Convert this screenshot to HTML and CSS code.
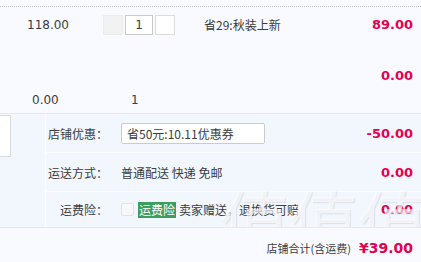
FILE: index.html
```html
<!DOCTYPE html>
<html lang="zh-CN">
<head>
    <meta charset="UTF-8">
    <title>订单确认</title>
    <link rel="stylesheet" href="styles.css">
</head>
<body>
    <div class="order">
        <div class="item">
            <div class="item-row">
                <div class="price">118.00</div>
                <div class="qty">
                    <span class="qty-btn minus"></span>
                    <span class="qty-input">1</span>
                    <span class="qty-btn plus"></span>
                </div>
                <div class="promo">省29:秋装上新</div>
                <div class="sum">89.00</div>
            </div>
            <div class="item-row row-extra">
                <div class="sum">0.00</div>
            </div>
            <div class="item-row row-sub">
                <div class="price">0.00</div>
                <div class="sub-qty">1</div>
            </div>
        </div>

        <div class="shop">
            <div class="shop-side">
                <div class="memo"></div>
            </div>
            <div class="shop-main">
                <div class="opt">
                    <div class="opt-label">店铺优惠：</div>
                    <div class="opt-body">
                        <div class="coupon">省50元:10.11优惠券</div>
                    </div>
                    <div class="sum">-50.00</div>
                </div>
                <div class="opt">
                    <div class="opt-label">运送方式：</div>
                    <div class="opt-body">普通配送 快递 免邮</div>
                    <div class="sum">0.00</div>
                </div>
                <div class="opt">
                    <div class="opt-label">运费险：</div>
                    <div class="opt-body">
                        <span class="check"></span>
                        <span class="tag">运费险</span>
                        <span>卖家赠送，退换货可赔</span>
                    </div>
                    <div class="sum">0.00</div>
                </div>
            </div>
            <div class="watermark">值值值</div>
        </div>

        <div class="total">
            <span class="total-label">店铺合计(含运费)</span>
            <span class="total-sum">¥39.00</span>
        </div>
    </div>
</body>
</html>
```

FILE: styles.css
```css
body {
    margin: 0;
    background: #f8faff;
    color: #3c3c3c;
    font-family: "Noto Sans CJK SC", "DejaVu Sans", sans-serif;
    font-size: 12px;
}
.order {
    width: 421px;
    height: 262px;
    overflow: hidden;
}
.item {
    margin-top: 6px;
    border-top: 1px dotted #b8bcc4;
    border-bottom: 1px solid #e4e8ef;
    height: 106px;
}
.item-row {
    display: flex;
    align-items: center;
    height: 35px;
}
.row-extra {
    height: 18px;
    margin-top: 24px;
    justify-content: flex-end;
}
.row-sub {
    height: 18px;
    margin-top: 7px;
}
.price {
    width: 103px;
    padding-left: 27px;
    box-sizing: border-box;
    font-family: "DejaVu Sans", sans-serif;
    font-size: 12px;
}
.row-sub .price {
    padding-left: 32px;
    width: 131px;
}
.sub-qty {
    font-family: "DejaVu Sans", sans-serif;
}
.qty {
    display: flex;
    gap: 1px;
    width: 101px;
}
.qty-btn, .qty-input {
    height: 20px;
    border: 1px solid #dcdcdc;
    background: #fff;
    box-sizing: border-box;
}
.qty-btn {
    width: 20px;
}
.qty-btn.minus {
    background: #f2f2f2;
    border-color: #ececec;
}
.qty-input {
    width: 28px;
    margin-left: 1px;
    margin-right: 1px;
    text-align: center;
    line-height: 18px;
    border-color: #c8c8c8;
    font-family: "DejaVu Sans", sans-serif;
}
.promo {
    flex: 1;
}
.sum {
    width: 90px;
    margin-left: auto;
    padding-right: 8px;
    text-align: right;
    color: #e5004f;
    font-family: "DejaVu Sans", sans-serif;
    font-weight: bold;
    font-size: 13px;
}
.shop {
    position: relative;
    display: flex;
    background: #f2f6fd;
    border-bottom: 1px solid #e4e8ef;
    height: 113px;
    overflow: hidden;
}
.shop-side {
    width: 45px;
    border-right: 1px solid #fbfcfe;
    padding-top: 1px;
}
.memo {
    width: 10px;
    height: 40px;
    background: #fff;
    border: 1px solid #d8dbe0;
    border-left: none;
}
.shop-main {
    flex: 1;
    display: flex;
    flex-direction: column;
}
.opt {
    display: flex;
    align-items: center;
    height: 38px;
    border-bottom: 1px solid #fbfcfe;
}
.opt:last-child {
    border-bottom: none;
    flex: 1;
}
.opt-label {
    width: 62px;
    padding-right: 13px;
    text-align: right;
}
.opt-body {
    display: flex;
    align-items: center;
    flex: 1;
    white-space: nowrap;
}
.coupon {
    width: 144px;
    height: 21px;
    box-sizing: border-box;
    padding-left: 5px;
    line-height: 19px;
    background: #fff;
    border: 1px solid #c8cbd0;
    border-radius: 2px;
}
.check {
    width: 11px;
    height: 11px;
    margin-right: 4px;
    border: 1px solid #e0e2e6;
    border-radius: 2px;
    background: #f7f8fa;
}
.tag {
    background: #3d9d5c;
    color: #fff;
    padding: 0 1px;
    margin-right: 3px;
    line-height: 16px;
}
.watermark {
    position: absolute;
    right: -6px;
    top: 70px;
    font-size: 70px;
    line-height: 72px;
    letter-spacing: -1px;
    color: rgba(255, 255, 255, 0.6);
    text-shadow: 1px 1px 1px rgba(170, 178, 195, 0.3);
    pointer-events: none;
}
.total {
    display: flex;
    justify-content: flex-end;
    align-items: center;
    height: 40px;
    padding-right: 8px;
    gap: 8px;
}
.total-label {
    font-size: 11px;
}
.total-sum {
    color: #e5004f;
    font-family: "DejaVu Sans", sans-serif;
    font-weight: bold;
    font-size: 14px;
}
```
